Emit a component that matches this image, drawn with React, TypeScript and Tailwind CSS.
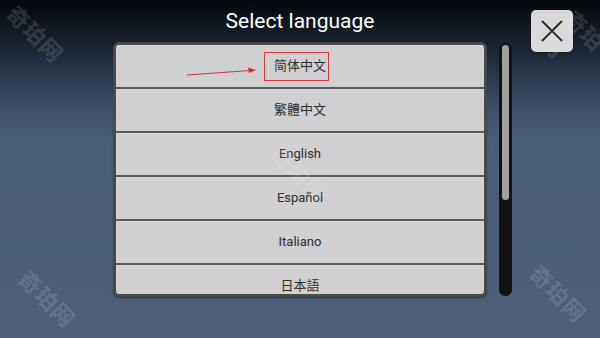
import React from "react";

const langs = ["简体中文", "繁體中文", "English", "Español", "Italiano", "日本語"];

const font = { fontFamily: 'Roboto, "Noto Sans CJK SC", sans-serif' };

function Watermark({ cls }: { cls: string }) {
  return (
    <div
      className={`absolute rotate-45 text-[22px] font-bold tracking-[1px] text-white/15 pointer-events-none ${cls}`}
      style={font}
    >
      奇珀网
    </div>
  );
}

export default function App() {
  return (
    <div
      className="relative w-[600px] h-[338px] overflow-hidden bg-[linear-gradient(to_bottom,#05080d_0px,#1b2634_50px,#3f516a_110px,#4a5d77_140px,#4d5f77_338px)]"
      style={font}
    >
      <div className="flex pl-[113px]">
        <div className="flex flex-col w-[374px]">
          <div className="h-[42px] flex items-center justify-center text-white text-[21px] pt-[2px]">
            Select language
          </div>
          <div className="h-[255px] border-[3px] border-[#4a4a4b] rounded-[6px] bg-[#d0cfd1] overflow-hidden shadow-[0_1px_2px_rgba(0,0,0,0.4)]">
            {langs.map((l) => (
              <div
                key={l}
                className="h-[44px] shrink-0 flex items-center justify-center border-b-2 border-[#59595b] border-t border-t-[#dcdcdd] text-[13px] text-[#2e2e2e] pb-[1px]"
              >
                {l}
              </div>
            ))}
          </div>
        </div>
        <div className="ml-[12px] mt-[43px] w-[13px] h-[253px] rounded-[6px] bg-[#111412] flex justify-center pt-[2px]">
          <div className="w-[7px] h-[155px] rounded-full bg-[#9fa19e]" />
        </div>
        <div className="ml-[19px] mt-[10px] w-[42px] h-[42px] rounded-[5px] bg-[#d9d9d9] flex items-center justify-center shadow-[0_1px_2px_rgba(0,0,0,0.4)]">
          <svg width="24" height="24" viewBox="0 0 24 24">
            <path d="M2 2 L22 22 M22 2 L2 22" stroke="#2a2a2a" strokeWidth="1.8" />
          </svg>
        </div>
      </div>

      <div className="absolute left-[264px] top-[52px] w-[65px] h-[29px] border border-[#d8383c]" />
      <svg className="absolute left-0 top-0 pointer-events-none" width="600" height="338">
        <line x1="187" y1="75" x2="250" y2="70.5" stroke="#c8343a" strokeWidth="1" />
        <path d="M256 70 L248 67.5 L249 73 Z" fill="#c8343a" />
      </svg>

      <Watermark cls="left-[0px] top-[18px]" />
      <Watermark cls="left-[12px] top-[283px]" />
      <Watermark cls="left-[264px] top-[158px] text-white/10" />
      <Watermark cls="left-[523px] top-[278px]" />
      <Watermark cls="left-[548px] top-[12px]" />
    </div>
  );
}
